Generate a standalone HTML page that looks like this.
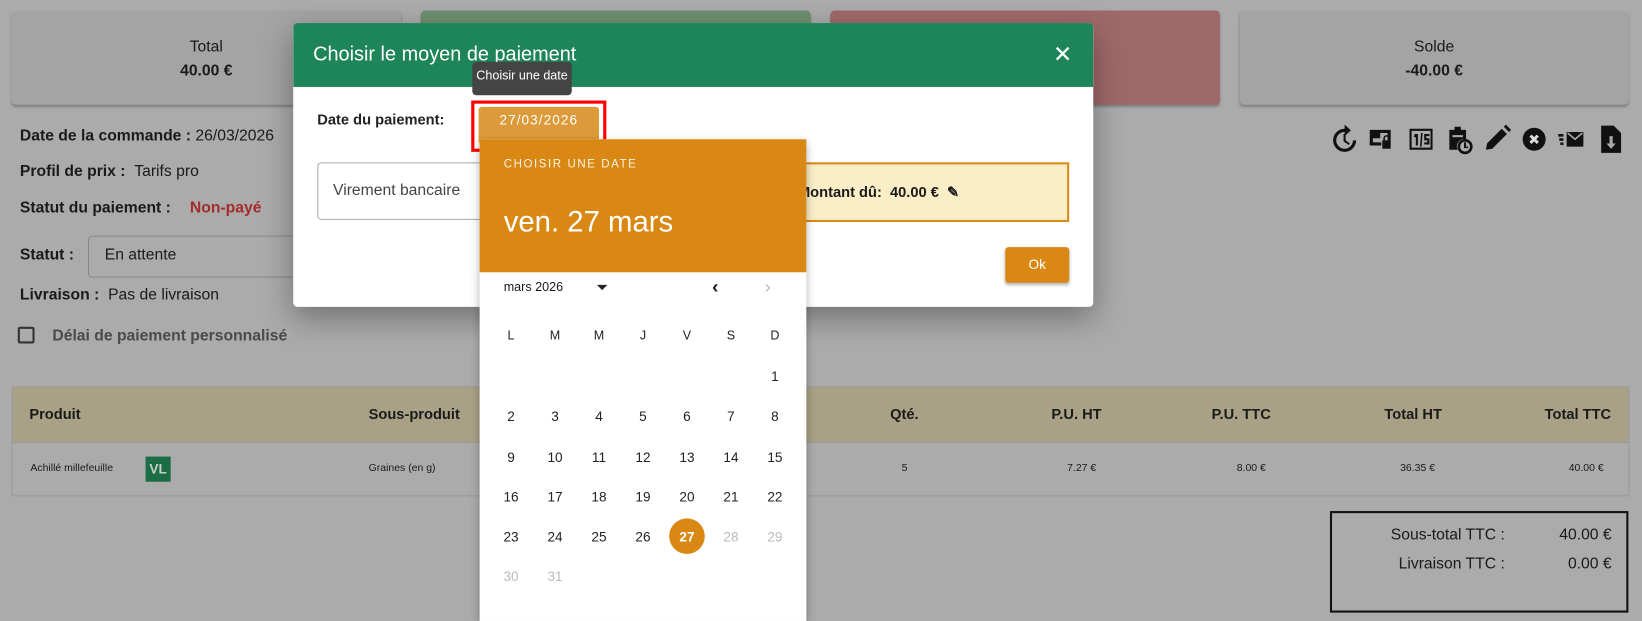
<!DOCTYPE html>
<html><head><meta charset="utf-8"><style>
*{box-sizing:border-box;margin:0;padding:0}
html,body{width:1642px;height:589px;overflow:hidden;background:#ababab}
#stage{position:absolute;left:0;top:0;width:1568px;height:563px;transform:scale(1.0472);transform-origin:0 0;font-family:"Liberation Sans",sans-serif;color:#1a1a1a}
.a{position:absolute}
.card{position:absolute;top:10px;height:90px;border-radius:4px;text-align:center;font-size:15px;box-shadow:0 2px 2px rgba(0,0,0,.25)}
.card b{display:block;font-size:15px;margin-top:6px}
.lbl{font-size:15px;font-weight:bold;white-space:nowrap}
.lbl span{font-weight:normal}
.th{position:absolute;top:387px;font-size:14px;font-weight:bold}
.td{position:absolute;top:442px;font-size:10px}
.cal{position:absolute;font-size:13px;width:30px;text-align:center;color:#222}
.ic{position:absolute;top:118px}
</style></head><body><div id="stage">
<div class="card" style="left:11px;width:372px;background:#a4a4a4"><div style="margin-top:26px">Total</div><b>40.00 €</b></div>
<div class="card" style="left:402px;width:372px;background:#6d8f70"></div>
<div class="card" style="left:793px;width:372px;background:#a06969"></div>
<div class="card" style="left:1184px;width:371px;background:#a4a4a4"><div style="margin-top:26px">Solde</div><b>-40.00 €</b></div>

<div class="a lbl" style="left:19px;top:121px">Date de la commande : <span>26/03/2026</span></div>
<div class="a lbl" style="left:19px;top:155px">Profil de prix : <span>&nbsp;Tarifs pro</span></div>
<div class="a lbl" style="left:19px;top:190px">Statut du paiement : <span style="color:#a42c2c;font-weight:bold;margin-left:14px">Non-payé</span></div>
<div class="a lbl" style="left:19px;top:235px">Statut :</div>
<div class="a" style="left:84px;top:225px;width:250px;height:40px;border:1px solid #888;border-radius:4px;padding:9px 15px;font-size:15px">En attente</div>
<div class="a lbl" style="left:19px;top:273px">Livraison : <span>&nbsp;Pas de livraison</span></div>
<div class="a" style="left:17px;top:312px;width:16px;height:16px;border:2px solid #333;border-radius:2px"></div>
<div class="a lbl" style="left:50px;top:312px;color:#4a4a4a">Délai de paiement personnalisé</div>

<svg class="ic" style="left:1270px" width="290" height="32" viewBox="0 0 290 32" fill="#111">
<path d="M14 5a11 11 0 1 0 11 11h-3a8 8 0 1 1-8-8v4l6-5.5L14 1z"/><path d="M13 10h2v6l4 3-1 1.5-5-3.5z"/>
<g transform="translate(36,0)"><path d="M2 6h20v10h-3V9h-7v5H5v4h8v3H2z"/><rect x="14" y="16" width="8" height="8"/><path d="M15 16v-2a3 3 0 0 1 6 0v2h-1.5v-2a1.5 1.5 0 0 0-3 0v2z"/></g>
<g transform="translate(74,0)"><path d="M2 5h22v20H2zm2 2v16h18V7z"/><path d="M7 10h3v11H8v-8H6zm6-1h1.5l-1 13H12zm3 1h5v2h-3v2h3v6h-5v-2h3v-2h-3z"/></g>
<g transform="translate(110,0)"><path d="M4 6h5V3h6v3h5v9a7 7 0 0 0-8 10H4z" /><circle cx="19" cy="22" r="6" fill="none" stroke="#111" stroke-width="2.5"/><path d="M18 18h2v4h2v1.5h-4z"/><rect x="7" y="11" width="10" height="2" fill="#aaa"/></g>
<g transform="translate(146,0)"><path d="M3 25l1-6L18 5l5 5L9 24zM20 3l2-2 5 5-2 2z"/></g>
<g transform="translate(182,0)"><circle cx="13" cy="15" r="11"/><path d="M8.5 10.5l2-2 2.5 2.5 2.5-2.5 2 2-2.5 2.5 2.5 2.5-2 2-2.5-2.5-2.5 2.5-2-2 2.5-2.5z" fill="#ddd" transform="translate(0,2)"/></g>
<g transform="translate(216,0)"><path d="M10 8h16v14H10z" /><path d="M11 9l7 6 7-6" stroke="#aaa" stroke-width="1.5" fill="none"/><rect x="2" y="10" width="5" height="2.5"/><rect x="3" y="14" width="4" height="2.5"/><rect x="4" y="18" width="3" height="2.5"/></g>
<g transform="translate(256,0)"><path d="M3 2h12l7 7v19H3z"/><path d="M11 12h3v7h3l-4.5 5-4.5-5h3z" fill="#aaa"/></g>
</svg>

<div class="a" style="left:11px;top:369px;width:1545px;height:105px;border:1px solid #999;background:#ababab"></div>
<div class="a" style="left:12px;top:370px;width:1543px;height:53px;background:#a8a185;border-bottom:1px solid #999"></div>
<div class="th" style="left:28px">Produit</div>
<div class="th" style="left:352px">Sous-produit</div>
<div class="th" style="left:850px">Qté.</div>
<div class="th" style="left:1004px">P.U. HT</div>
<div class="th" style="left:1157px">P.U. TTC</div>
<div class="th" style="left:1322px">Total HT</div>
<div class="th" style="left:1475px">Total TTC</div>
<div class="td" style="left:29px">Achillé millefeuille</div>
<div class="a" style="left:139px;top:436px;width:24px;height:24px;background:#1a6d45;color:#ccc;font-weight:bold;font-size:13px;text-align:center;line-height:24px">VL</div>
<div class="td" style="left:352px">Graines (en g)</div>
<div class="td" style="left:861px">5</div>
<div class="td" style="left:1019px">7.27 €</div>
<div class="td" style="left:1181px">8.00 €</div>
<div class="td" style="left:1337px">36.35 €</div>
<div class="td" style="left:1498px">40.00 €</div>

<div class="a" style="left:1270px;top:488px;width:285px;height:97px;border:2px solid #111;font-size:15px">
<div class="a" style="right:116px;top:12px">Sous-total TTC :</div><div class="a" style="right:14px;top:12px">40.00 €</div>
<div class="a" style="right:116px;top:40px">Livraison TTC :</div><div class="a" style="right:14px;top:40px">0.00 €</div>
</div>

<div class="a" style="left:280px;top:22px;width:764px;height:271px;background:#fff;border-radius:4px;box-shadow:0 10px 30px rgba(0,0,0,.35);overflow:hidden">
<div style="height:61px;background:#1e8459;color:#fff;font-size:19px;padding:20px 19px">Choisir le moyen de paiement<span style="position:absolute;right:20px;top:17px;font-size:22px">✕</span></div>
<div class="a lbl" style="left:23px;top:84px;font-size:14px;color:#222">Date du paiement:</div>
<div class="a" style="left:23px;top:133px;width:160px;height:55px;border:1px solid #aaa;border-radius:4px;padding:17px 14px;font-size:15px;color:#444">Virement bancaire</div>
<div class="a" style="left:470px;top:133px;width:271px;height:57px;background:#fbeec6;border:2px solid #d98c1c;padding:18px 0 0 10px;font-size:14px;font-weight:bold">Montant dû:&nbsp; 40.00 € &nbsp;✎</div>
<div class="a" style="left:680px;top:214px;width:61px;height:34px;background:#d98813;border-radius:3px;color:#fff;font-size:13px;text-align:center;line-height:34px;box-shadow:0 2px 3px rgba(0,0,0,.3)">Ok</div>
</div>
<div class="a" style="left:451px;top:59px;width:95px;height:32px;background:#444;border-radius:4px;color:#fff;font-size:12px;text-align:center;line-height:27px">Choisir une date</div>
<div class="a" style="left:450px;top:96px;width:129px;height:49px;border:3px solid #f00"></div>
<div class="a" style="left:457px;top:102px;width:115px;height:36px;background:#dd9a3a;border-radius:3px;color:#fff;font-size:13px;text-align:center;line-height:26px;letter-spacing:1px">27/03/2026</div>

<div class="a" style="left:458px;top:133px;width:312px;height:460px;background:#fff;box-shadow:0 3px 8px rgba(0,0,0,.3)">
<div style="height:127px;background:#d98813;color:#fff;padding:18px 23px">
<div style="font-size:11px;letter-spacing:1.5px;opacity:.9">CHOISIR UNE DATE</div>
<div style="font-size:28px;margin-top:33px">ven. 27 mars</div></div>
<div class="a" style="left:23px;top:134px;font-size:12px">mars 2026</div>
<div class="a" style="left:112px;top:136px;width:0;height:0;border-left:5px solid transparent;border-right:5px solid transparent;border-top:5px solid #222;margin-top:3px"></div>
<div class="a" style="left:222px;top:131px;font-size:18px;font-weight:bold">‹</div>
<div class="a" style="left:272px;top:131px;font-size:18px;color:#bbb">›</div>
</div>
<div id="c"></div>
<div class="a" style="left:639px;top:495px;width:34px;height:34px;border-radius:50%;background:#d98813"></div>
</div>
<script>
var xs=[473,515,557,599,641,683,725],h='';
"LMMJVSD".split('').forEach(function(d,i){h+='<div class="cal" style="left:'+xs[i]+'px;top:313px;font-size:12px">'+d+'</div>';});
var ys=[352,390,429,467,505,543];
for(var d=1;d<=31;d++){var idx=d+5,r=Math.floor(idx/7),c=idx%7;
var col=d==27?'#fff;font-weight:bold':(d>27?'#bbb':'#222');
h+='<div class="cal" style="left:'+xs[c]+'px;top:'+ys[r]+'px;color:'+col+';z-index:2">'+d+'</div>';}
document.getElementById('c').innerHTML=h;
</script>
</body></html>
